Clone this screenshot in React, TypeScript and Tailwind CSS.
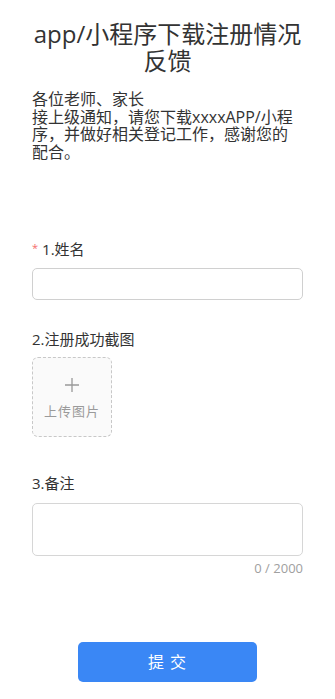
import React from "react";

export default function App() {
  return (
    <div
      className="min-h-[699px] bg-white px-8 pt-5 pb-4 text-[#333]"
      style={{ fontFamily: '"Open Sans", "Noto Sans CJK SC", sans-serif' }}
    >
      <h1 className="text-center text-[24px] leading-[27px] font-normal text-[#333]">
        app/小程序下载注册情况反馈
      </h1>
      <p className="mt-[17px] text-[16px] leading-[17.7px] text-[#333]">
        各位老师、家长
        <br />
        接上级通知，请您下载xxxxAPP/小程序，并做好相关登记工作，感谢您的配合。
      </p>

      <div className="mt-[77px]">
        <div className="flex items-center text-[15px] leading-[20px]">
          <span className="mr-[4px] text-[11px] leading-none text-[#f56c6c] -mt-[3px]">*</span>
          <span>1.姓名</span>
        </div>
        <input
          className="mt-[9px] block h-[32px] w-full rounded-[5px] border border-[#d0d0d0] px-2 text-[14px] outline-none"
          type="text"
        />
      </div>

      <div className="mt-[29px]">
        <div className="text-[15px] leading-[20px]">2.注册成功截图</div>
        <div className="mt-[8px] flex h-[80px] w-[80px] flex-col items-center justify-center rounded-[6px] border border-dashed border-[#c8c8c8] bg-[#fafafa]">
          <svg width="16" height="16" viewBox="0 0 16 16" className="mt-[3px]">
            <path d="M8 1v14M1 8h14" stroke="#999" strokeWidth="1.3" fill="none" />
          </svg>
          <span className="mt-[10px] text-[13px] tracking-[1px] leading-[16px] text-[#9a9a9a]">上传图片</span>
        </div>
      </div>

      <div className="mt-[36px]">
        <div className="text-[15px] leading-[20px]">3.备注</div>
        <textarea
          className="mt-[10px] block h-[53px] w-full resize-none rounded-[5px] border border-[#d6d6d6] px-2 py-1 text-[14px] outline-none"
        />
        <div className="mt-[3px] text-right text-[13px] leading-[18px] text-[#a0a0a0]">0 / 2000</div>
      </div>

      <div className="mt-[65px] flex justify-center">
        <button className="h-[40px] w-[179px] rounded-[5px] bg-[#3a87f5] text-[16px] text-white tracking-[1px]">
          提 交
        </button>
      </div>
    </div>
  );
}
